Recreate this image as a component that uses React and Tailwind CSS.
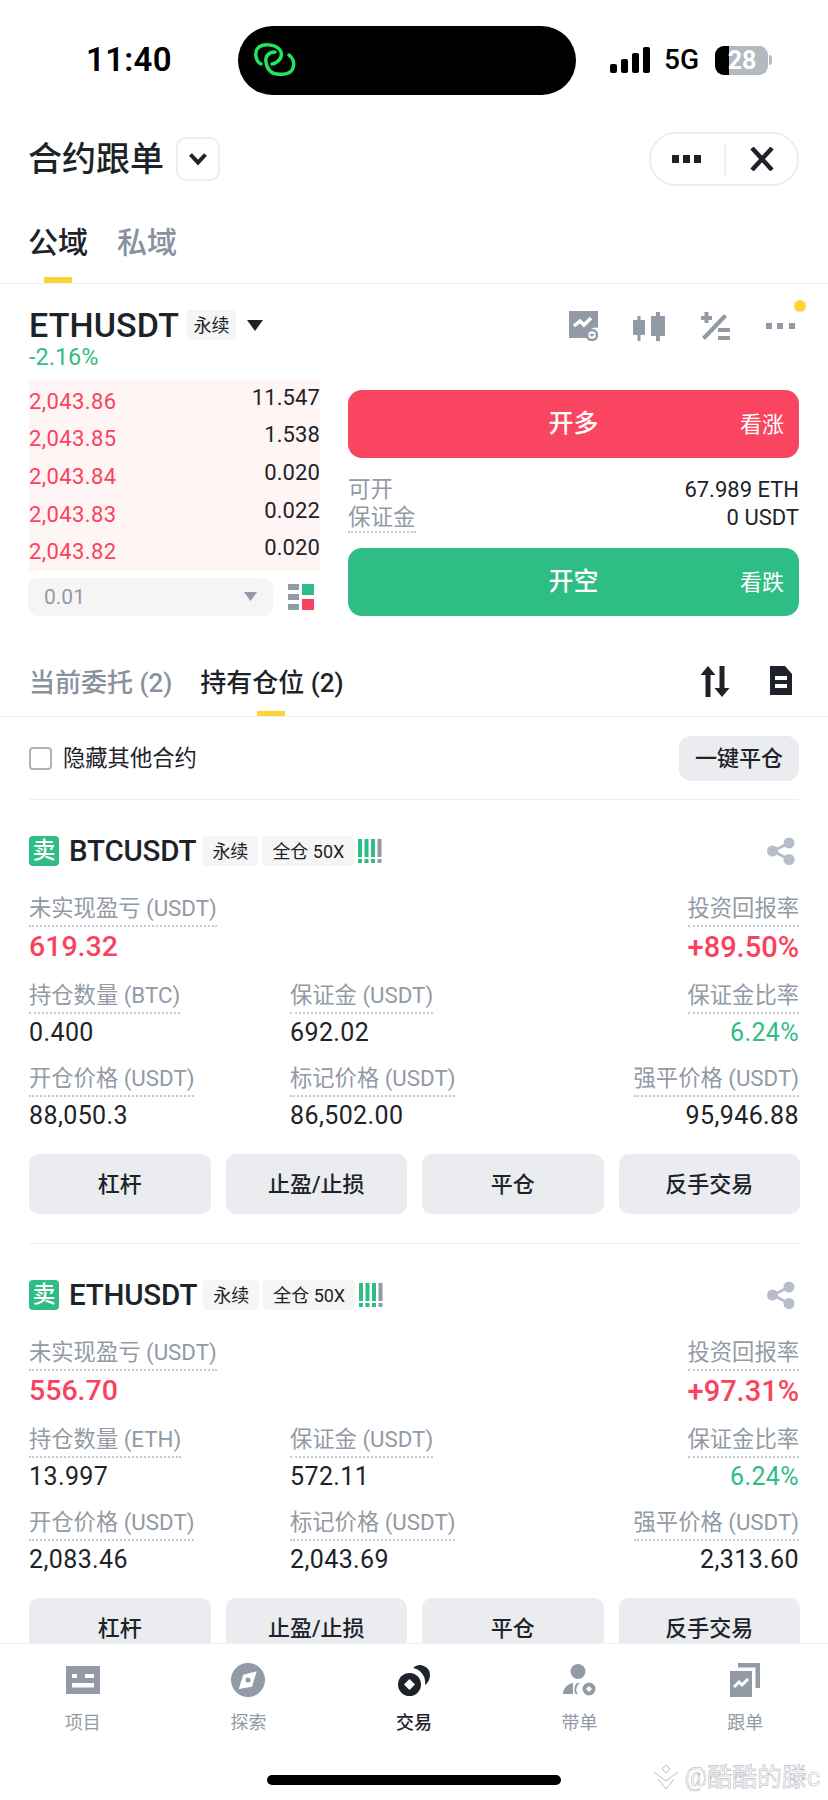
import React from 'react';

const RED = 'text-[#F9435E]';
const GREEN = 'text-[#2EBD85]';

function Tag({ children, wide }) {
  return (
    <span className={`flex h-[30px] items-center justify-center rounded-[4px] bg-[#F5F5F5] text-[18px] text-[#1E2329] ${wide ? 'w-[92px]' : 'w-[56px]'}`}>
      {children}
    </span>
  );
}

function LevelBars() {
  return (
    <svg width="24" height="24" viewBox="0 0 24 24">
      {[0, 6.5, 13, 19.5].map((x, i) => (
        <g key={x} fill={i === 3 ? '#929AA5' : '#2EBD85'}>
          <rect x={x} y="0" width="4" height="18" />
          <rect x={x} y="20" width="4" height="4" />
        </g>
      ))}
    </svg>
  );
}

function ShareIcon() {
  return (
    <svg className="mr-[4px]" width="28" height="28" viewBox="0 0 28 28" fill="#B7BDC6">
      <circle cx="22" cy="6" r="5.5" />
      <circle cx="22" cy="22.5" r="5.5" />
      <circle cx="5.5" cy="14" r="5.5" />
      <path d="M6 14 22 6M6 14l16 8.5" stroke="#B7BDC6" strokeWidth="3" />
    </svg>
  );
}

function Metric({ label, value, right, valueClass = 'text-[#1E2329]', valueH = 'h-[37px]' }) {
  return (
    <div className={`flex flex-col ${right ? 'items-end' : 'items-start'}`}>
      <span className="h-[33px] whitespace-nowrap border-b-2 border-dotted border-[#C5C9D0] text-[22.3px] leading-[28px] tracking-normal text-[#929AA5]">
        {label}
      </span>
      <span className={`flex items-center whitespace-nowrap ${valueH} ${valueClass}`}>{value}</span>
    </div>
  );
}

function Position({ symbol, base, pnl, roi, qty, margin, open, mark, liq }) {
  return (
    <div className="mx-[29px] border-b border-[#EDEEF0] pb-[29px] pt-[36px]">
      <div className="flex h-[30px] items-center justify-between">
        <div className="flex items-center">
          <span className="flex h-[30px] w-[30px] items-center justify-center rounded-[4px] bg-[#2EBD85] text-[23px] font-medium text-white">卖</span>
          <span className="ml-[10px] text-[29.5px] font-medium tracking-[-0.2px] text-[#1E2329]">{symbol}</span>
          <span className="ml-[6px]"><Tag>永续</Tag></span>
          <span className="ml-[4px]"><Tag wide>全仓 50X</Tag></span>
          <span className="ml-[4px]"><LevelBars /></span>
        </div>
        <ShareIcon />
      </div>
      <div className="mt-[28px] flex justify-between">
        <Metric label="未实现盈亏 (USDT)" value={pnl} valueH="h-[41px]" valueClass={`${RED} text-[28.5px] font-medium`} />
        <Metric right label="投资回报率" value={roi} valueH="h-[41px]" valueClass={`${RED} text-[29px] font-medium`} />
      </div>
      <div className="mt-[13px] grid grid-cols-[261px_1fr_auto] text-[25px] tracking-[0.4px]">
        <Metric label={`持仓数量 (${base})`} value={qty} />
        <Metric label="保证金 (USDT)" value={margin} />
        <Metric right label="保证金比率" value="6.24%" valueClass={GREEN} />
      </div>
      <div className="mt-[13px] grid grid-cols-[261px_1fr_auto] text-[25px] tracking-[0.4px]">
        <Metric label="开仓价格 (USDT)" value={open} />
        <Metric label="标记价格 (USDT)" value={mark} />
        <Metric right label="强平价格 (USDT)" value={liq} />
      </div>
      <div className="mr-[-1px] mt-[20px] grid grid-cols-4 gap-[15px]">
        {['杠杆', '止盈/止损', '平仓', '反手交易'].map((t) => (
          <div key={t} className="flex h-[60px] items-center justify-center rounded-[10px] bg-[#EAECEF] text-[22px] font-medium text-[#1E2329]">{t}</div>
        ))}
      </div>
    </div>
  );
}

function NavItem({ label, active, children }) {
  return (
    <div className="flex flex-col items-center">
      <div className="flex h-[36px] items-center justify-center">{children}</div>
      <span className={`mt-[13px] text-[18px] leading-[24px] ${active ? 'font-medium text-[#1E2329]' : 'text-[#929AA5]'}`}>{label}</span>
    </div>
  );
}

const asks = [
  ['2,043.86', '11.547'],
  ['2,043.85', '1.538'],
  ['2,043.84', '0.020'],
  ['2,043.83', '0.022'],
  ['2,043.82', '0.020'],
];

export default function App() {
  return (
    <div className="relative flex h-[1800px] w-[828px] flex-col overflow-hidden bg-white [font-family:Roboto,'Noto_Sans_CJK_SC',sans-serif]">
      {/* status bar */}
      <div className="flex h-[120px] shrink-0 items-center pl-[86px]">
        <span className="w-[152px] text-[33px] font-semibold tracking-[0.3px] text-black">11:40</span>
        <div className="flex h-[69px] w-[338px] items-center rounded-[35px] bg-black pl-[15px]">
          <svg width="44" height="34" viewBox="0 0 44 34" fill="none" stroke="#22E55F" strokeWidth="3.5" strokeLinecap="round">
            <path d="M8 21C2 18 1 8 6 4C10 1 20 1 25 5C30 9 29 15 25 18C23 20 21 21 19 21" />
            <path d="M22 9C16 9 12 13 13 19C14 27 19 31 24 31C30 32 38 31 40 25C42 20 40 15 36 12" />
          </svg>
        </div>
        <svg className="ml-[34px]" width="41" height="26" viewBox="0 0 41 26" fill="#000">
          <rect x="0" y="17" width="7" height="9" rx="2" />
          <rect x="11" y="12" width="7" height="14" rx="2" />
          <rect x="22" y="6" width="7" height="20" rx="2" />
          <rect x="33" y="0" width="7" height="26" rx="2" />
        </svg>
        <span className="ml-[13px] w-[37px] text-[28px] font-medium leading-none text-black">5G</span>
        <div className="relative ml-[14px] flex h-[29px] w-[53px] items-center justify-center overflow-hidden rounded-[9px] bg-[#B4B8BF]">
          <div className="absolute bottom-0 left-0 top-0 w-[14px] bg-black" />
          <span className="relative pl-[1px] text-[25px] font-bold leading-none text-white">28</span>
        </div>
        <div className="ml-[1px] h-[10px] w-[3px] rounded-r-full bg-[#B4B8BF]" />
      </div>

      {/* title */}
      <div className="flex h-[78px] shrink-0 items-center justify-between pl-[28px] pr-[29px]">
        <div className="flex items-center">
          <span className="text-[34px] font-medium leading-none text-[#1E2329]">合约跟单</span>
          <div className="ml-[12px] flex h-[44px] w-[44px] items-center justify-center rounded-[10px] border-2 border-[#EDEEF0]">
            <svg width="20" height="14" viewBox="0 0 20 14" fill="none" stroke="#1E2329" strokeWidth="4">
              <path d="M2.5 2.5 10 10.5l7.5-8" />
            </svg>
          </div>
        </div>
        <div className="flex h-[54px] w-[150px] items-center rounded-full border-2 border-[#EDEEF0]">
          <svg className="ml-[21px]" width="30" height="8" viewBox="0 0 30 8" fill="#1E2329">
            <rect x="0" y="0" width="7" height="8" />
            <rect x="11" y="0" width="7" height="8" />
            <rect x="22" y="0" width="7" height="8" />
          </svg>
          <div className="ml-[22px] h-[32px] w-[2px] bg-[#EDEEF0]" />
          <svg className="ml-[24px]" width="24" height="24" viewBox="0 0 24 24" fill="none" stroke="#1E2329" strokeWidth="4.5">
            <path d="M2 1l20 22M22 1 2 23" />
          </svg>
        </div>
      </div>

      {/* 公域 / 私域 */}
      <div className="flex h-[86px] shrink-0 gap-[29px] border-b border-[#F0F1F3] pl-[28px]">
        <div className="relative pt-[30px] text-[30px] font-medium leading-[30px] text-[#1E2329]">
          公域
          <div className="absolute bottom-0 left-[16px] h-[6px] w-[28px] bg-[#FCD535]" />
        </div>
        <div className="pt-[30px] text-[30px] font-medium leading-[30px] text-[#8A919E]">私域</div>
      </div>

      {/* ticker */}
      <div className="flex shrink-0 items-start justify-between pl-[29px] pr-[29px] pt-[20px]">
        <div>
          <div className="flex h-[42px] items-center">
            <span className="text-[34px] font-medium leading-none tracking-[0.1px] text-[#1E2329]">ETHUSDT</span>
            <span className="ml-[8px] flex h-[30px] w-[49px] items-center justify-center rounded-[4px] bg-[#F5F5F5] text-[18px] text-[#1E2329]">永续</span>
            <svg className="ml-[11px]" width="16" height="11" viewBox="0 0 16 11" fill="#1E2329">
              <path d="M0 0h16L8 11z" />
            </svg>
          </div>
          <div className={`h-[21px] text-[23.5px] leading-[23px] ${GREEN}`}>-2.16%</div>
        </div>
        <div className="relative mr-[4px] mt-[7px] flex items-center">
          <svg width="29" height="30" viewBox="0 0 29 30" fill="#929AA5">
            <path d="M0 0h29v17a8 8 0 0 0-10 10H0z" />
            <path d="M5 15l6-5 4 4 7-7" stroke="#fff" strokeWidth="3.5" fill="none" />
            <circle cx="23" cy="24" r="5" fill="none" stroke="#929AA5" strokeWidth="2.5" />
            <path d="M20 23h6l-3 3z" />
          </svg>
          <svg className="ml-[35px]" width="32" height="29" viewBox="0 0 32 29" fill="#929AA5">
            <rect x="0" y="8" width="12" height="15" rx="1" />
            <rect x="4.5" y="4" width="3" height="25" />
            <rect x="18" y="4" width="14" height="20" rx="1" />
            <rect x="23" y="0" width="4" height="29" />
          </svg>
          <svg className="ml-[36px]" width="29" height="29" viewBox="0 0 29 29" fill="#929AA5">
            <rect x="0" y="4" width="11" height="4" />
            <rect x="3.5" y="0" width="4" height="11" />
            <path d="M23 2l3 3L4 28l-3-3z" />
            <rect x="17" y="16" width="12" height="4" />
            <rect x="17" y="24" width="12" height="4" />
          </svg>
          <svg className="ml-[36px]" width="29" height="6" viewBox="0 0 29 6" fill="#929AA5">
            <rect x="0" y="0" width="6" height="6" />
            <rect x="11" y="0" width="6" height="6" />
            <rect x="23" y="0" width="6" height="6" />
          </svg>
          <div className="absolute right-[-11px] top-[-11px] h-[12px] w-[12px] rounded-full bg-[#FCD535]" />
        </div>
      </div>

      {/* order book + buttons */}
      <div className="mt-[13px] flex shrink-0 pl-[28px] pr-[29px]">
        <div className="w-[292px]">
          <div className="ml-[1px] bg-[#FFF5F5] pb-[3px]">
            {asks.map(([price, size]) => (
              <div key={price} className="flex h-[37.6px] items-center justify-between text-[22px] leading-none">
                <span className="mt-[6px] tracking-[0.4px] text-[#F9435E]">{price}</span>
                <span className="mb-[2px] tracking-[0.1px] text-[#1E2329]">{size}</span>
              </div>
            ))}
          </div>
          <div className="mt-[7px] flex items-center">
            <div className="flex h-[38px] w-[245px] items-center justify-between rounded-[10px] bg-[#F5F5F5] pl-[16px] pr-[16px] text-[21px] text-[#929AA5]">
              <span className="mt-[2px]">0.01</span>
              <svg width="13" height="9" viewBox="0 0 13 9" fill="#929AA5"><path d="M0 0h13L6.5 9z" /></svg>
            </div>
            <svg className="ml-[15px]" width="26" height="26" viewBox="0 0 26 26">
              <rect x="0" y="0" width="11" height="6" fill="#929AA5" />
              <rect x="0" y="10" width="11" height="6" fill="#929AA5" />
              <rect x="0" y="20" width="11" height="6" fill="#929AA5" />
              <rect x="14" y="0" width="12" height="11" fill="#2EBD85" />
              <rect x="14" y="15" width="12" height="11" fill="#F9435E" />
            </svg>
          </div>
        </div>
        <div className="ml-[28px] flex flex-1 flex-col pt-[10px]">
          <div className="relative flex h-[68px] items-center justify-center rounded-[14px] bg-[#FA4560] text-[25px] font-medium text-white">
            开多
            <span className="absolute right-[15px] text-[22px] font-normal">看涨</span>
          </div>
          <div className="mt-[18px] flex h-[27px] items-center justify-between text-[22.5px] leading-none">
            <span className="text-[#929AA5]">可开</span>
            <span className="text-[22px] text-[#1E2329]">67.989 ETH</span>
          </div>
          <div className="flex h-[30px] items-center justify-between text-[22.5px] leading-none">
            <span className="flex h-[30px] items-center border-b-2 border-dotted border-[#C5C9D0] text-[#929AA5]">保证金</span>
            <span className="text-[22px] text-[#1E2329]">0 USDT</span>
          </div>
          <div className="relative mt-[15px] flex h-[68px] items-center justify-center rounded-[14px] bg-[#2EBD85] text-[25px] font-medium text-white">
            开空
            <span className="absolute right-[15px] text-[22px] font-normal">看跌</span>
          </div>
        </div>
      </div>

      {/* orders tabs */}
      <div className="flex h-[101px] shrink-0 justify-between border-b border-[#F0F1F3] pl-[29px] pr-[36px]">
        <div className="flex gap-[28px] pt-[52px] text-[26px] font-medium leading-[30px]">
          <span className="text-[#8A919E]">当前委托 (2)</span>
          <div className="relative text-[#1E2329]">
            持有仓位 (2)
            <div className="absolute bottom-0 left-[57px] h-[5px] w-[28px] bg-[#FCD535]" />
          </div>
        </div>
        <div className="flex items-start gap-[40px] pt-[50px]">
          <svg width="30" height="31" viewBox="0 0 30 31" fill="#1E2329">
            <path d="M8 0l7.5 9H10.500v22h-5V9H.500z" />
            <path d="M22 31l-7.500-9h5V0h5v22h5z" />
          </svg>
          <svg width="22" height="29" viewBox="0 0 22 29" fill="#1E2329">
            <path fillRule="evenodd" d="M0 0h15l7 8v21H0zM5 10v4h12v-4zM5 18v4h12v-4z" />
          </svg>
        </div>
      </div>

      {/* scrolling list */}
      <div className="min-h-0 flex-1 overflow-hidden">
        <div className="mx-[29px] flex h-[83px] items-center justify-between border-b border-[#EDEEF0]">
          <div className="flex items-center">
            <div className="h-[23px] w-[23px] rounded-[4px] border-2 border-[#AEB4BC]" />
            <span className="ml-[11px] mt-[2px] text-[22.3px] text-[#1E2329]">隐藏其他合约</span>
          </div>
          <div className="flex h-[45px] w-[120px] items-center justify-center rounded-[12px] bg-[#EAECEF] text-[22px] font-medium text-[#1E2329]">一键平仓</div>
        </div>
        <Position symbol="BTCUSDT" base="BTC" pnl="619.32" roi="+89.50%" qty="0.400" margin="692.02" open="88,050.3" mark="86,502.00" liq="95,946.88" />
        <Position symbol="ETHUSDT" base="ETH" pnl="556.70" roi="+97.31%" qty="13.997" margin="572.11" open="2,083.46" mark="2,043.69" liq="2,313.60" />
      </div>

      {/* bottom nav */}
      <div className="h-[157px] shrink-0 border-t border-[#F0F1F3] bg-white pt-[18px]">
        <div className="grid grid-cols-5">
          <NavItem label="项目">
            <svg width="34" height="28" viewBox="0 0 34 28" fill="#929AA5">
              <path fillRule="evenodd" d="M0 0h34v28H0zM6 8v4h5V8zM19 8v4h9V8zM6 17v4.500h22V17z" />
            </svg>
          </NavItem>
          <NavItem label="探索">
            <svg width="34" height="34" viewBox="0 0 34 34">
              <circle cx="17" cy="17" r="17" fill="#929AA5" />
              <path d="M25.700 8.300 21 23.700 7.700 26l4.600-14.300z" fill="#fff" />
              <circle cx="17" cy="17" r="2.500" fill="#929AA5" />
            </svg>
          </NavItem>
          <NavItem active label="交易">
            <svg width="32" height="34" viewBox="0 0 32 34">
              <path d="M15 5a10 10 0 0 1 17 7c0 4-2 8-5 10a15 15 0 0 0-12-17z" fill="#1E2329" />
              <circle cx="11.500" cy="21.500" r="11.500" fill="#1E2329" />
              <path d="M11.500 16l5.500 5.500-5.500 5.500L6 21.500z" fill="#fff" />
            </svg>
          </NavItem>
          <NavItem label="带单">
            <svg width="33" height="32" viewBox="0 0 33 32" fill="#929AA5">
              <circle cx="15" cy="7.500" r="7.500" />
              <path d="M10 19v11H0c0-5 4-10 10-11z" />
              <path d="M17 19c-4 3-5 8-2 11h-2.500c-2-4-1-9 1.500-11z" />
              <circle cx="26" cy="25" r="6.500" />
              <path d="M26 22l3 3-3 3-3-3z" fill="#fff" />
            </svg>
          </NavItem>
          <NavItem label="跟单">
            <svg width="30" height="34" viewBox="0 0 30 34" fill="#929AA5">
              <path d="M8 0h22v25h-4.500V4.500H8z" />
              <rect x="0" y="8" width="22" height="26" />
              <path d="M4 24l5-5 3 3 6-6" stroke="#fff" strokeWidth="3" fill="none" />
            </svg>
          </NavItem>
        </div>
      </div>

      {/* home indicator and watermark lie over the nav */}
      <div className="absolute bottom-[15px] left-[267px] h-[10px] w-[294px] rounded-full bg-black" />
      <div className="absolute bottom-[10px] right-[8px] flex items-center">
        <svg width="26" height="26" viewBox="0 0 26 26" fill="none" stroke="#B7BDC6" strokeWidth="1">
          <path d="M13 1l4 4-4 4-4-4zM1 8l12 9 12-9M5 15l8 10 8-10" />
        </svg>
        <span className="ml-[5px] text-[25px] leading-none text-transparent [-webkit-text-stroke:0.5px_#A9AFB8]">@酷酷的滕c</span>
      </div>
    </div>
  );
}
